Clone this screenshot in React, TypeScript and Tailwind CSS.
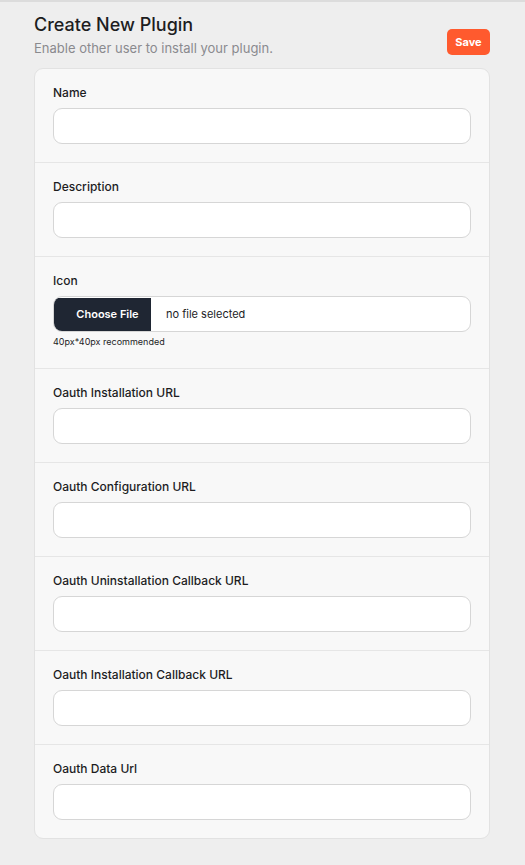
import React from "react";

const fields = [
  "Oauth Installation URL",
  "Oauth Configuration URL",
  "Oauth Uninstallation Callback URL",
  "Oauth Installation Callback URL",
  "Oauth Data Url",
];

function Field({ label, last }: { label: string; last?: boolean }) {
  return (
    <div className={`px-[18px] pt-[16px] pb-[18px] ${last ? "" : "border-b border-[#e6e6e6]"}`}>
      <div className="text-[12px] leading-[16px] font-medium text-[#1d1d1f]">{label}</div>
      <div className="mt-[7px] h-[36px] rounded-[9px] border border-[#d6d6d6] bg-white" />
    </div>
  );
}

export default function App() {
  return (
    <div
      className="min-h-[865px] w-full bg-[#eeeeee] border-t-2 border-[#dcdcdc]"
      style={{ fontFamily: "Inter, 'Noto Sans', sans-serif" }}
    >
      <div className="pl-[34px] pr-[35px] pt-[9px] pb-[27px]">
        <div className="flex items-start justify-between">
          <div>
            <div className="text-[18px] leading-[28px] font-medium text-[#1d1d1f]">Create New Plugin</div>
            <div className="text-[13px] leading-[18px] text-[#8a8a8e]">Enable other user to install your plugin.</div>
          </div>
          <button className="mt-[18px] h-[26px] w-[43px] rounded-[5px] bg-[#ff5a2e] text-[11px] font-bold text-white">
            Save
          </button>
        </div>
        <div className="mt-[11px] rounded-[9px] border border-[#e2e2e2] bg-[#f8f8f8]">
          <Field label="Name" />
          <Field label="Description" />
          <div className="px-[18px] pt-[16px] pb-[20px] border-b border-[#e6e6e6]">
            <div className="text-[12px] leading-[16px] font-medium text-[#1d1d1f]">Icon</div>
            <div className="mt-[7px] flex h-[36px] items-center rounded-[9px] border border-[#d6d6d6] bg-white overflow-hidden">
              <div className="flex h-[33px] w-[97px] items-center justify-center bg-[#1f2633] text-[11px] font-semibold text-white">
                <span className="ml-[10px]">Choose File</span>
              </div>
              <span className="ml-[15px] text-[11px] text-[#1d1d1f]">no file selected</span>
            </div>
            <div className="mt-[4px] text-[9px] leading-[12px] text-[#1d1d1f]">40px*40px recommended</div>
          </div>
          {fields.map((f, i) => (
            <Field key={f} label={f} last={i === fields.length - 1} />
          ))}
        </div>
      </div>
    </div>
  );
}
